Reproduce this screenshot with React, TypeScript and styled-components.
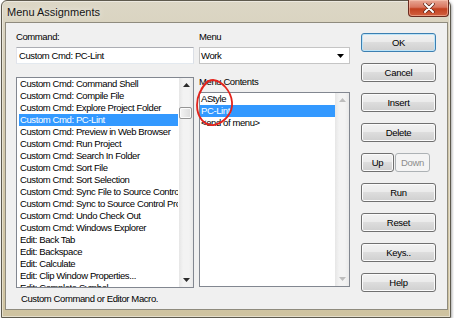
import React from 'react';
import styled, { createGlobalStyle } from 'styled-components';

const GlobalStyle = createGlobalStyle`
  html, body {
    margin: 0;
    padding: 0;
    background: #ffffff;
  }
  body {
    font-family: "Liberation Sans", Arial, sans-serif;
  }
`;

const FONT = `"Liberation Sans", Arial, sans-serif`;

const Window = styled.div`
  box-sizing: border-box;
  margin-left: 1px;
  width: 450px;
  height: 318px;
  border: 1px solid #5e5a4e;
  border-radius: 6px 6px 0 0;
  background: linear-gradient(to bottom, #dcd7c6 0%, #d3cab0 30%, #cfc3a0 100%);
  box-shadow: 1px 1px 3px rgba(0, 0, 0, 0.35), inset 0 0 0 1px rgba(255, 255, 255, 0.45);
  display: flex;
  flex-direction: column;
`;

const TitleBar = styled.div`
  height: 21px;
  display: flex;
  align-items: flex-start;
  justify-content: space-between;
`;

const Title = styled.span`
  font-family: ${FONT};
  font-size: 11px;
  line-height: 11px;
  margin: 6px 0 0 5px;
  color: #141414;
  text-shadow: 0 0 6px rgba(255, 255, 255, 0.9);
`;

const CloseButton = styled.div`
  box-sizing: border-box;
  width: 41px;
  height: 17px;
  margin: -1px 1px 0 0;
  border: 1px solid #6b2b1f;
  border-top: none;
  border-radius: 0 0 4px 4px;
  background: linear-gradient(to bottom, #e8a896 0%, #d9765f 45%, #c2401f 55%, #d2603f 100%);
  box-shadow: inset 0 0 0 1px rgba(255, 210, 190, 0.5);
  display: flex;
  align-items: center;
  justify-content: center;
`;

const Client = styled.div`
  box-sizing: border-box;
  margin: 0 2px 0 3px;
  height: 288px;
  border: 1px solid #8f8b7e;
  background: #f0f0f0;
  padding: 8px 0 0 10px;
  display: grid;
  grid-template-columns: 178px 151px 75px;
  column-gap: 5px;
  align-items: start;
`;

const Column = styled.div`
  display: flex;
  flex-direction: column;
  position: relative;
`;

const Label = styled.div<{ $gap?: number }>`
  font-family: ${FONT};
  font-size: 9.5px;
  letter-spacing: -0.4px;
  line-height: 12px;
  height: 12px;
  color: #000;
  margin-top: ${p => p.$gap ?? 0}px;
`;

const TextBox = styled.div`
  box-sizing: border-box;
  margin-top: 4px;
  height: 17px;
  border: 1px solid #abadb3;
  border-left-color: #e2e3ea;
  border-right-color: #dbdfe6;
  border-bottom-color: #e3e9ef;
  background: #fff;
  padding-left: 2px;
  font-family: ${FONT};
  font-size: 9.5px;
  letter-spacing: -0.4px;
  line-height: 15px;
  color: #000;
`;

const DropDown = styled(TextBox)`
  display: flex;
  justify-content: space-between;
  align-items: center;
  padding: 0 5px 0 1px;
  border-color: #c5c5c5;
  line-height: normal;
`;

const ListBox = styled.div<{ $height: number; $gap: number }>`
  box-sizing: border-box;
  height: ${p => p.$height}px;
  margin-top: ${p => p.$gap}px;
  border: 1px solid #828790;
  background: #fff;
  display: flex;
`;

const Items = styled.div<{ $inset: number }>`
  flex: 1;
  min-width: 0;
  overflow: hidden;
  padding: 0 ${p => (p.$inset ? 1 : 0)}px 0 ${p => p.$inset}px;
`;

const Item = styled.div<{ $selected?: boolean }>`
  box-sizing: border-box;
  height: 12px;
  line-height: 12px;
  padding-left: 1px;
  font-family: ${FONT};
  font-size: 9.5px;
  letter-spacing: -0.4px;
  white-space: nowrap;
  overflow: hidden;
  background: ${p => (p.$selected ? '#3399ff' : 'transparent')};
  color: ${p => (p.$selected ? '#fff' : '#000')};
`;

const ScrollBar = styled.div`
  width: 14px;
  flex: none;
  display: flex;
  flex-direction: column;
  background: linear-gradient(to right, #e6e6e6 0%, #f3f3f3 30%, #f3f3f3 70%, #e9e9e9 100%);
`;

const ArrowBox = styled.div`
  height: 14px;
  flex: none;
  display: flex;
  align-items: center;
  justify-content: center;
`;

const Track = styled.div`
  flex: 1;
  display: flex;
  flex-direction: column;
`;

const Thumb = styled.div<{ $top: number }>`
  box-sizing: border-box;
  margin: ${p => p.$top}px 1px 0 0;
  height: 12px;
  border: 1px solid #959595;
  border-radius: 2px;
  background: linear-gradient(to right, #f4f4f4 0%, #e8e8e8 50%, #dcdcdc 100%);
  box-shadow: inset 0 0 0 1px #fbfbfb;
`;

const StatusText = styled.div`
  margin-top: 5px;
  padding-left: 5px;
  font-family: ${FONT};
  font-size: 9.5px;
  letter-spacing: -0.4px;
  line-height: 12px;
  color: #000;
`;

const ButtonColumn = styled.div`
  margin: 2px 0 0 6px;
  display: flex;
  flex-direction: column;
  gap: 11px;
`;

const ButtonRow = styled.div`
  display: flex;
  justify-content: space-between;
`;

const Button = styled.button<{ $default?: boolean; $width?: number }>`
  box-sizing: border-box;
  height: 19px;
  width: ${p => p.$width ?? 75}px;
  padding: 0;
  font-family: ${FONT};
  font-size: 9.5px;
  letter-spacing: -0.3px;
  color: #000;
  border: 1px solid ${p => (p.$default ? '#3c7fb1' : '#707070')};
  border-radius: 3px;
  background: linear-gradient(to bottom, #f2f2f2 0%, #ebebeb 45%, #dddddd 50%, #cfcfcf 100%);
  box-shadow: inset 0 0 0 1px ${p => (p.$default ? '#bde4f8' : '#fbfbfb')};
  &:disabled {
    color: #8d8d8d;
    border-color: #adb2b5;
    background: #f4f4f4;
    box-shadow: none;
  }
`;

const Annotation = styled.svg`
  position: absolute;
  left: -7px;
  top: 45px;
  pointer-events: none;
`;

const Triangle = ({ up, color }: { up?: boolean; color: string }) => (
  <svg width="7" height="4" viewBox="0 0 7 4">
    <path d={up ? 'M0 4 L3.5 0 L7 4 Z' : 'M0 0 L7 0 L3.5 4 Z'} fill={color} />
  </svg>
);

const commands = [
  'Custom Cmd: Command Shell',
  'Custom Cmd: Compile File',
  'Custom Cmd: Explore Project Folder',
  'Custom Cmd: PC-Lint',
  'Custom Cmd: Preview in Web Browser',
  'Custom Cmd: Run Project',
  'Custom Cmd: Search In Folder',
  'Custom Cmd: Sort File',
  'Custom Cmd: Sort Selection',
  'Custom Cmd: Sync File to Source Control',
  'Custom Cmd: Sync to Source Control Project',
  'Custom Cmd: Undo Check Out',
  'Custom Cmd: Windows Explorer',
  'Edit: Back Tab',
  'Edit: Backspace',
  'Edit: Calculate',
  'Edit: Clip Window Properties...',
  'Edit: Complete Symbol',
];

const menuItems = ['AStyle', 'PC-Lint', '<end of menu>'];

export default function App() {
  return (
    <>
      <GlobalStyle />
      <Window>
        <TitleBar>
          <Title>Menu Assignments</Title>
          <CloseButton>
            <svg width="12" height="10" viewBox="0 0 12 10">
              <path d="M2 1 L10 9 M10 1 L2 9" stroke="#5a2418" strokeWidth="3.4" strokeLinecap="round" />
              <path d="M2 1 L10 9 M10 1 L2 9" stroke="#ffffff" strokeWidth="2" strokeLinecap="round" />
            </svg>
          </CloseButton>
        </TitleBar>
        <Client>
          <Column>
            <Label>Command:</Label>
            <TextBox>Custom Cmd: PC-Lint</TextBox>
            <ListBox $height={211} $gap={13}>
              <Items $inset={2}>
                {commands.map(c => (
                  <Item key={c} $selected={c === 'Custom Cmd: PC-Lint'}>
                    {c}
                  </Item>
                ))}
              </Items>
              <ScrollBar>
                <ArrowBox>
                  <Triangle up color="#2b2b2b" />
                </ArrowBox>
                <Track>
                  <Thumb $top={15} />
                </Track>
                <ArrowBox>
                  <Triangle color="#2b2b2b" />
                </ArrowBox>
              </ScrollBar>
            </ListBox>
            <StatusText>Custom Command or Editor Macro.</StatusText>
          </Column>

          <Column>
            <Label>Menu</Label>
            <DropDown>
              <span>Work</span>
              <Triangle color="#000" />
            </DropDown>
            <Label $gap={12}>Menu Contents</Label>
            <ListBox $height={195} $gap={4}>
              <Items $inset={0}>
                {menuItems.map(m => (
                  <Item key={m} $selected={m === 'PC-Lint'}>
                    {m}
                  </Item>
                ))}
              </Items>
              <ScrollBar>
                <ArrowBox>
                  <Triangle up color="#bdbdbd" />
                </ArrowBox>
                <Track />
                <ArrowBox>
                  <Triangle color="#bdbdbd" />
                </ArrowBox>
              </ScrollBar>
            </ListBox>
            <Annotation width="46" height="54" viewBox="0 0 46 54">
              <path
                d="M8 17 C10 10 15 4 21 4 C30 5 39 15 40 26 C41 36 34 46 22 49 C12 50 5 41 5 29 C5 20 9 12 16 5"
                fill="none"
                stroke="#e3231c"
                strokeWidth="1.8"
                strokeLinecap="round"
              />
            </Annotation>
          </Column>

          <ButtonColumn>
            <Button $default>OK</Button>
            <Button>Cancel</Button>
            <Button>Insert</Button>
            <Button>Delete</Button>
            <ButtonRow>
              <Button $width={33}>Up</Button>
              <Button $width={35} disabled>
                Down
              </Button>
            </ButtonRow>
            <Button>Run</Button>
            <Button>Reset</Button>
            <Button>Keys..</Button>
            <Button>Help</Button>
          </ButtonColumn>
        </Client>
      </Window>
    </>
  );
}
